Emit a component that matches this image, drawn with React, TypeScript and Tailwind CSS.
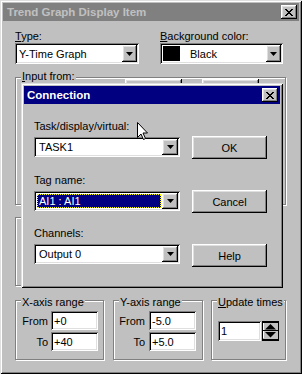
import React from 'react';

const raised = 'shadow-[inset_-1px_-1px_#000,inset_1px_1px_#fff,inset_-2px_-2px_#808080,inset_2px_2px_#dfdfdf]';
const sunken = 'shadow-[inset_1px_1px_#808080,inset_-1px_-1px_#fff,inset_2px_2px_#000,inset_-2px_-2px_#dfdfdf]';
const frame = 'shadow-[inset_1px_1px_#dfdfdf,inset_-1px_-1px_#000,inset_2px_2px_#fff,inset_-2px_-2px_#808080]';
const etched = 'border border-[#808080] shadow-[1px_1px_0_#fff,inset_1px_1px_0_#fff]';

const CloseGlyph = () => (
  <svg width="8" height="7" viewBox="0 0 8 7">
    <path
      d="M0 0h2v1H0z M6 0h2v1H6z M1 1h2v1H1z M5 1h2v1H5z M2 2h4v1H2z M3 3h2v1H3z M2 4h4v1H2z M1 5h2v1H1z M5 5h2v1H5z M0 6h2v1H0z M6 6h2v1H6z"
      fill="#000"
    />
  </svg>
);

const CloseButton = () => (
  <div className={`w-[16px] h-[14px] mr-[2px] bg-[#c0c0c0] flex items-center justify-center ${raised}`}>
    <CloseGlyph />
  </div>
);

const DropButton = ({ w }: { w: string }) => (
  <div className={`${w} h-full bg-[#c0c0c0] flex items-center justify-center ${raised}`}>
    <svg width="7" height="4" viewBox="0 0 7 4">
      <path d="M0 0h7L3.5 4z" fill="#000" />
    </svg>
  </div>
);

const Combo = ({
  className,
  btn = 'w-[16px]',
  children,
}: {
  className: string;
  btn?: string;
  children: React.ReactNode;
}) => (
  <div className={`bg-white p-[2px] flex ${sunken} ${className}`}>
    <div className="flex-1 flex items-center min-w-0">{children}</div>
    <DropButton w={btn} />
  </div>
);

const Field = ({ className, value }: { className: string; value: string }) => (
  <div className={`bg-white pl-[3px] flex items-center ${sunken} ${className}`}>{value}</div>
);

const Button = ({ label, className }: { label: string; className: string }) => (
  <div className={`bg-[#c0c0c0] flex items-center justify-center ${raised} ${className}`}>{label}</div>
);

const Group = ({
  label,
  top,
  className,
  children,
}: {
  label?: React.ReactNode;
  top?: string;
  className: string;
  children?: React.ReactNode;
}) => (
  <div className={`relative ${etched} ${className}`}>
    {label && <span className={`absolute left-[5px] ${top} bg-[#c0c0c0] px-[1px] leading-[14px]`}>{label}</span>}
    {children}
  </div>
);

const Spin = () => (
  <svg width="17" height="20" viewBox="0 0 17 20">
    <rect x="0.5" y="0.5" width="16" height="19" fill="#c0c0c0" stroke="#000" />
    <line x1="1" y1="1.5" x2="16" y2="1.5" stroke="#000" />
    <line x1="1.5" y1="2" x2="1.5" y2="9" stroke="#fff" />
    <path d="M8.5 3 L14 8.5 H3 Z" fill="#000" />
    <line x1="0" y1="9.5" x2="17" y2="9.5" stroke="#000" />
    <line x1="1.5" y1="10" x2="1.5" y2="17" stroke="#fff" />
    <path d="M3 11 H14 L8.5 16.5 Z" fill="#000" />
    <line x1="1" y1="18.5" x2="16" y2="18.5" stroke="#000" />
  </svg>
);

const Cursor = () => (
  <svg width="12" height="19" viewBox="0 0 12 19" className="absolute left-[137px] top-[122px]">
    <path d="M0.5 0.5 V15.5 L4 12 L6.5 17.5 L8.5 16.5 L6 11 H10.5 Z" fill="#fff" stroke="#000" />
  </svg>
);

export default function App() {
  return (
    <div
      className={`relative w-[302px] h-[374px] p-[3px] flex flex-col bg-[#c0c0c0] text-black text-[11px] leading-[14px] font-['Liberation_Sans',Arial,sans-serif] overflow-hidden ${frame}`}
    >
      {/* inactive caption */}
      <div className="h-[18px] shrink-0 bg-[#808080] flex items-center justify-between pl-[4px]">
        <span className="text-[#c0c0c0] font-bold text-[11.5px]">Trend Graph Display Item</span>
        <CloseButton />
      </div>

      <div className="pl-[12px] flex flex-col">
        <div className="flex mt-[8px]">
          <div className="w-[124px] flex flex-col">
            <span className="h-[14px]">
              <u>T</u>ype:
            </span>
            <Combo className="h-[21px]" btn="w-[15px]">
              <span className="pl-[2px]">Y-Time Graph</span>
            </Combo>
          </div>
          <div className="w-[123px] ml-[21px] flex flex-col">
            <span className="h-[14px]">
              <u>B</u>ackground color:
            </span>
            <Combo className="h-[21px]" btn="w-[15px]">
              <span className="w-[17px] h-[15px] bg-black ml-[1px]" />
              <span className="ml-[10px]">Black</span>
            </Combo>
          </div>
        </div>

        <Group
          className="mt-[13px] w-[271px] h-[128px]"
          top="top-[-9px]"
          label={
            <>
              <u>I</u>nput from:
            </>
          }
        >
          <div className="flex pl-[109px] gap-[20px] pt-[1px]">
            <Button label="ADD" className="w-[57px] h-[20px]" />
            <Button label="DELETE" className="w-[57px] h-[20px]" />
          </div>
        </Group>

        <Group className="mt-[12px] w-[250px] h-[69px]" />

        <div className="flex mt-[14px]">
          <Group className="w-[89px] h-[60px]" top="top-[-6px]" label="X-axis range">
            <div className="flex flex-col gap-[2px] pt-[10px] pr-[5px]">
              <div className="flex items-center justify-end gap-[3px]">
                <span>From</span>
                <Field className="w-[47px] h-[19px]" value="+0" />
              </div>
              <div className="flex items-center justify-end gap-[3px]">
                <span>To</span>
                <Field className="w-[47px] h-[19px]" value="+40" />
              </div>
            </div>
          </Group>
          <Group className="ml-[9px] w-[90px] h-[60px]" top="top-[-6px]" label="Y-axis range">
            <div className="flex flex-col gap-[2px] pt-[10px] pr-[6px]">
              <div className="flex items-center justify-end gap-[4px]">
                <span>From</span>
                <Field className="w-[47px] h-[19px]" value="-5.0" />
              </div>
              <div className="flex items-center justify-end gap-[4px]">
                <span>To</span>
                <Field className="w-[47px] h-[19px]" value="+5.0" />
              </div>
            </div>
          </Group>
          <Group
            className="ml-[8px] w-[75px] h-[60px]"
            top="top-[-6px]"
            label={
              <>
                <u>U</u>pdate times
              </>
            }
          >
            <div className="flex pl-[6px] pt-[20px] gap-[1px]">
              <Field className="w-[43px] h-[20px]" value="1" />
              <Spin />
            </div>
          </Group>
        </div>
      </div>

      {/* Connection dialog on top */}
      <div className={`absolute left-[21px] top-[83px] w-[262px] h-[205px] p-[3px] flex flex-col bg-[#c0c0c0] ${frame}`}>
        <div className="h-[18px] shrink-0 bg-[#000080] flex items-center justify-between pl-[3px]">
          <span className="text-white font-bold text-[11.5px]">Connection</span>
          <CloseButton />
        </div>
        <div className="flex pl-[10px] gap-[12px]">
          <div className="w-[146px] flex flex-col pt-[15px]">
            <span className="h-[14px]">Task/display/virtual:</span>
            <Combo className="h-[20px] mt-[4px]">
              <span className="pl-[3px]">TASK1</span>
            </Combo>
            <span className="h-[14px] mt-[16px]">Tag name:</span>
            <Combo className="h-[20px] mt-[4px]">
              <span className="flex-1 self-stretch m-[1px] bg-[#000080] text-white border border-dotted border-[#ffff00] flex items-center pl-[1px]">
                AI1 : AI1
              </span>
            </Combo>
            <span className="h-[14px] mt-[15px]">Channels:</span>
            <Combo className="h-[20px] mt-[4px]">
              <span className="pl-[3px]">Output 0</span>
            </Combo>
          </div>
          <div className="flex flex-col pt-[32px]">
            <Button label="OK" className="w-[75px] h-[23px]" />
            <Button label="Cancel" className="w-[75px] h-[23px] mt-[31px]" />
            <Button label="Help" className="w-[75px] h-[23px] mt-[31px]" />
          </div>
        </div>
      </div>

      <Cursor />
    </div>
  );
}
